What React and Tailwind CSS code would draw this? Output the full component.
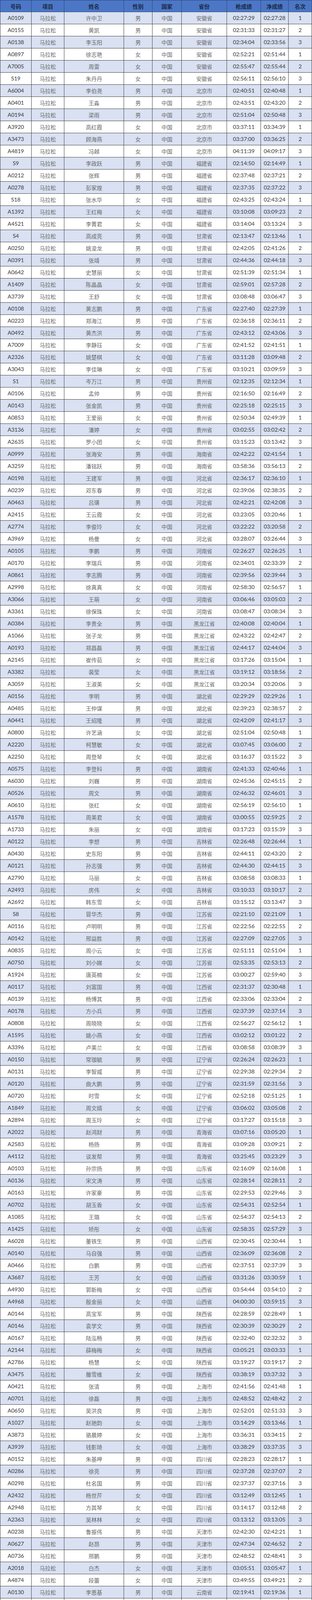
import React from 'react';

const raw = `A0109 许中卫 男 安徽省 02:27:29 02:27:28 1
A0155 黄凯 男 安徽省 02:31:33 02:31:27 2
A0138 李玉阳 男 安徽省 02:34:04 02:33:56 3
A0897 徐志艳 女 安徽省 02:52:21 02:51:44 1
A7005 周雷 女 安徽省 02:55:47 02:55:44 2
S19 朱丹丹 女 安徽省 02:56:11 02:56:10 3
A6004 李伯尧 男 北京市 02:40:51 02:40:48 1
A0401 王淼 男 北京市 02:43:51 02:43:20 2
A0194 梁雨 男 北京市 02:51:04 02:50:48 3
A3920 高红霞 女 北京市 03:37:11 03:34:39 1
A3473 顾海燕 女 北京市 03:37:00 03:36:25 2
A4819 冯越 女 北京市 04:11:39 04:09:17 3
S9 李政跃 男 福建省 02:14:50 02:14:49 1
A0212 张辉 男 福建省 02:37:48 02:37:21 2
A0278 彭家煌 男 福建省 02:37:35 02:37:22 3
S18 张水华 女 福建省 02:43:25 02:43:24 1
A1392 王红梅 女 福建省 03:10:08 03:09:23 2
A4521 李菁君 女 福建省 03:14:04 03:13:24 3
S4 高成亮 男 甘肃省 02:13:47 02:13:46 1
A0250 姚浚龙 男 甘肃省 02:42:05 02:41:26 2
A0391 张靖 男 甘肃省 02:44:36 02:44:18 3
A0642 史慧丽 女 甘肃省 02:51:39 02:51:34 1
A1409 陈晶晶 女 甘肃省 02:59:01 02:57:28 2
A3739 王舒 女 甘肃省 03:08:48 03:06:47 3
A0108 黄志鹏 男 广东省 02:27:40 02:27:39 1
A0223 郑海江 男 广东省 02:36:18 02:36:11 2
A0492 黄杰洪 男 广东省 02:43:12 02:43:06 3
A7009 李静珏 女 广东省 02:41:52 02:41:51 1
A2326 姚楚棋 女 广东省 03:11:28 03:09:48 2
A3043 李佳琳 女 广东省 03:10:21 03:09:59 3
S1 岑万江 男 贵州省 02:12:35 02:12:34 1
A0106 孟帅 男 贵州省 02:16:50 02:16:49 2
A0143 张金凯 男 贵州省 02:25:18 02:25:15 3
A0853 王爱丽 女 贵州省 02:50:34 02:49:39 1
A3136 潘婷 女 贵州省 03:02:55 03:02:42 2
A2635 罗小团 女 贵州省 03:15:23 03:13:42 3
A0999 张海安 男 海南省 02:42:22 02:41:54 1
A3259 潘铭跃 男 海南省 03:58:36 03:56:13 2
A0198 王建军 男 河北省 02:36:17 02:36:10 1
A0239 邓东春 男 河北省 02:39:06 02:38:35 2
A0463 吕璜 男 河北省 02:42:21 02:42:08 3
A2415 王云霞 女 河北省 03:23:05 03:20:46 1
A2774 李俊玲 女 河北省 03:22:22 03:20:58 2
A3969 杨曼 女 河北省 03:28:07 03:26:44 3
A0105 李鹏 男 河南省 02:26:27 02:26:25 1
A0170 李瑞兵 男 河南省 02:34:01 02:33:39 2
A0861 李志腾 男 河南省 02:39:56 02:39:44 3
A2998 徐真真 女 河南省 02:58:30 02:56:57 1
A3066 王萌 女 河南省 03:06:46 03:05:03 2
A3361 徐保珠 女 河南省 03:08:47 03:08:34 3
A0384 李贵全 男 黑龙江省 02:40:08 02:40:04 1
A1066 张子龙 男 黑龙江省 02:43:22 02:42:47 2
A0193 郑昌磊 男 黑龙江省 02:44:17 02:44:04 3
A2145 崔传茹 女 黑龙江省 03:17:26 03:15:04 1
A3382 裴莹 女 黑龙江省 03:19:12 03:18:56 2
A3059 王淑美 女 黑龙江省 03:20:34 03:20:06 3
A0156 李明 男 湖北省 02:29:29 02:29:26 1
A0485 王仲谋 男 湖北省 02:39:23 02:38:57 2
A0441 王绍隆 男 湖北省 02:42:09 02:41:17 3
A0800 许艺涵 女 湖北省 02:51:04 02:50:48 1
A2220 柯慧敏 女 湖北省 03:07:45 03:06:00 2
A2250 周登琴 女 湖北省 03:16:37 03:15:22 3
A0575 李登科 男 湖南省 02:41:33 02:40:46 1
A6030 刘巍 男 湖南省 02:45:36 02:45:15 2
A0526 周文 男 湖南省 02:46:32 02:46:01 3
A0610 张红 女 湖南省 02:56:19 02:56:10 1
A1578 周美君 女 湖南省 03:00:55 02:59:25 2
A1733 朱丽 女 湖南省 03:17:23 03:15:39 3
A0122 李想 男 吉林省 02:26:48 02:26:44 1
A0430 史东阳 男 吉林省 02:44:11 02:43:20 2
A0121 孙志强 男 吉林省 02:44:30 02:44:15 3
A2790 马丽 女 吉林省 03:08:58 03:08:33 1
A2493 房伟 女 吉林省 03:10:33 03:10:17 2
A2692 韩东雪 女 吉林省 03:15:12 03:13:47 3
S8 冒华杰 男 江苏省 02:21:10 02:21:09 1
A0116 卢明明 男 江苏省 02:22:56 02:22:55 2
A0142 邢益胜 男 江苏省 02:27:09 02:27:05 3
A0835 周小云 女 江苏省 02:51:11 02:51:04 1
A0750 刘小娣 女 江苏省 02:53:35 02:53:13 2
A1924 唐英楠 女 江苏省 03:00:27 02:59:40 3
A0117 刘富国 男 江西省 02:31:37 02:30:48 1
A0139 杨博其 男 江西省 02:33:06 02:33:04 2
A0178 方小兵 男 江西省 02:37:39 02:37:14 3
A0808 周晓晓 女 江西省 02:56:27 02:56:12 1
A1595 姚小燕 女 江西省 03:02:12 03:01:22 2
A3396 卢美兰 女 江西省 03:08:58 03:08:39 3
A0150 常珈毓 男 辽宁省 02:26:24 02:26:23 1
A0131 李智威 男 辽宁省 02:29:38 02:29:34 2
A0120 曲大鹏 男 辽宁省 02:31:59 02:31:56 3
A0720 时雪 女 辽宁省 02:52:18 02:51:25 1
A1849 周文婧 女 辽宁省 03:06:02 03:05:08 2
A2894 周玉玲 女 辽宁省 03:17:27 03:15:18 3
A2022 赵鸿财 男 青海省 03:07:16 03:05:20 1
A2583 杨扬 男 青海省 03:09:28 03:09:21 2
A4112 谈发帮 男 青海省 03:25:45 03:23:29 3
A0103 孙宗扬 男 山东省 02:16:09 02:16:08 1
A0136 宋文涛 男 山东省 02:28:14 02:28:11 2
A0163 许家豪 男 山东省 02:29:53 02:29:46 3
A0702 胡玉香 女 山东省 02:54:31 02:52:54 1
A1085 王璐 女 山东省 02:54:37 02:54:13 2
A1425 矫彤 女 山东省 02:58:35 02:57:29 3
A6028 董铁生 男 山西省 02:30:45 02:30:44 1
A0140 马自强 男 山西省 02:36:09 02:36:08 2
A0466 白鹏 男 山西省 02:37:51 02:37:39 3
A3687 王芳 女 山西省 03:31:26 03:30:59 1
A4930 郭新梅 女 山西省 03:54:44 03:54:10 2
A4968 殷金丽 女 山西省 04:00:30 03:59:15 3
A0144 高宝军 男 陕西省 02:28:59 02:28:49 1
A0146 袁学文 男 陕西省 02:30:39 02:30:29 2
A0167 陆泓畅 男 陕西省 02:32:40 02:32:32 3
A2144 薛梅梅 女 陕西省 03:05:21 03:03:33 1
A2786 杨慧 女 陕西省 03:19:27 03:19:17 2
A3475 雒雪维 女 陕西省 03:38:19 03:37:32 3
A0421 张清 男 上海市 02:41:56 02:41:48 1
A0701 徐磊 男 上海市 02:48:52 02:48:42 2
A0650 吴洪良 男 上海市 02:52:01 02:51:33 3
A1027 赵驰韵 女 上海市 03:14:29 03:13:46 1
A3873 骆晨婷 女 上海市 03:36:31 03:34:15 2
A3939 钱影琦 女 上海市 03:38:29 03:37:35 3
A0152 朱基呷 男 四川省 02:28:23 02:28:17 1
A0286 徐亮 男 四川省 02:37:28 02:37:07 2
A0298 杜名国 男 四川省 02:37:37 02:37:16 3
A2432 杨世芹 女 四川省 03:12:49 03:12:45 1
A2948 方其琴 女 四川省 03:14:17 03:12:48 2
A2363 吴林林 女 四川省 03:13:12 03:13:05 3
A0238 鲁振伟 男 天津市 02:42:30 02:42:21 1
A0627 赵昂 男 天津市 02:47:34 02:46:52 2
A0736 邢鹏 男 天津市 02:48:52 02:48:41 3
A2018 白杰 女 天津市 03:05:51 03:05:47 1
A4874 段蕾 女 天津市 03:49:55 03:49:21 2
A0130 李恩基 男 云南省 02:19:41 02:19:36 1
S6 冯铭缘 男 云南省 02:20:28 02:20:27 2
A0119 赵海杰 男 云南省 02:32:22 02:32:17 3
S16 窦发仙 女 云南省 02:40:43 02:40:42 1
A3548 董祯燕 女 云南省 03:23:48 03:23:23 2
A4590 何绕红 女 云南省 03:38:22 03:37:18 3
A0118 吴振涛 男 浙江省 02:23:45 02:23:44 1
A0127 余哲 男 浙江省 02:28:58 02:28:55 2
A0200 赵梓皓 男 浙江省 02:31:18 02:31:00 3
A0365 丁璐 女 浙江省 02:48:15 02:48:12 1
A1424 卢慧艳 女 浙江省 03:01:29 03:00:19 2
A1677 欧阳永芬 女 浙江省 03:07:21 03:07:05 3
A0104 周友发 男 重庆市 02:19:28 02:19:27 1
A0101 许汝安 男 重庆市 02:28:49 02:28:47 2
A4484 马军 男 重庆市 02:57:47 02:57:20 3
A1854 王银春 女 重庆市 03:01:33 03:01:03 1
S10 巴合塔尔·吾拉孜艾力 男 新疆维吾尔自治区 02:20:44 02:20:43 1
A1486 张珺坤 男 新疆维吾尔自治区 02:58:27 02:57:42 2
A1332 肖鹏飞 男 新疆维吾尔自治区 02:59:48 02:58:41 3
A0968 王婷婷 女 新疆维吾尔自治区 02:59:42 02:58:14 1
A1276 阚婷 女 新疆维吾尔自治区 02:59:16 02:58:31 2
A0164 孟克乌乐吉 男 内蒙古自治区 02:29:44 02:29:36 1
A0235 曹圣 男 内蒙古自治区 02:45:48 02:45:41 2
A0679 赵昀鹏 男 内蒙古自治区 02:50:27 02:49:04 3
A2622 康瑞峰 女 内蒙古自治区 03:03:35 03:03:12 1
A2325 安翠云 女 内蒙古自治区 03:09:43 03:09:21 2
A3216 乔飞雪 女 内蒙古自治区 03:27:55 03:27:16 3
A0260 江盛意 男 宁夏回族自治区 02:47:44 02:47:35 1
A0472 杨锐 男 宁夏回族自治区 02:49:28 02:48:31 2
A0599 叶韶宇 男 宁夏回族自治区 02:50:17 02:49:49 3
A4365 强月兰 女 宁夏回族自治区 03:36:19 03:36:15 1
A4258 魏彦秀 女 宁夏回族自治区 03:53:12 03:52:54 2
A0234 覃继辉 男 广西壮族自治区 02:35:30 02:35:11 1
A0349 庞俊富 男 广西壮族自治区 02:39:35 02:38:27 2
A0567 龚逸波 男 广西壮族自治区 02:47:26 02:47:23 3
A2103 黄梅 女 广西壮族自治区 03:10:05 03:08:25 1
A4075 石善楚 女 广西壮族自治区 03:31:53 03:30:21 2
A3633 黄娟秀 女 广西壮族自治区 03:44:25 03:42:56 3
A1746 洪长堤 男 澳门特别行政区 03:13:45 03:12:03 1
A0290 程中洲 男 台湾省 02:38:58 02:38:56 1`;

const rows = raw.split('\n').map((line) => {
  const [code, name, gender, province, gun, net, rank] = line.trim().split(' ');
  return { code, name, gender, province, gun, net, rank };
});

const headers = ['号码', '项目', '姓名', '性别', '国家', '省份', '枪成绩', '净成绩', '名次'];

// column widths taken from the sheet: 81 84 153 73 75 116 87 71 60 = 800
const grid = 'grid grid-cols-[81px_84px_153px_73px_75px_116px_87px_71px_60px]';
const num = "font-['Lato','Liberation_Sans',sans-serif] text-[#383838]";
const cjk = "font-['Noto_Sans_CJK_SC','Noto_Sans',sans-serif] text-[#6a6a6a]";
const cell = 'flex items-center justify-center overflow-hidden whitespace-nowrap border-r border-[#3f3f3f] text-[14px] leading-none';

function Row({ r, i }) {
  return (
    <div className={`${grid} h-[31px] border-b border-[#3f3f3f] ${i % 2 === 0 ? 'bg-[#d9e1f2]' : 'bg-white'}`}>
      <div className={`${cell} ${num} border-l`}>{r.code}</div>
      <div className={`${cell} ${cjk}`}>马拉松</div>
      <div className={`${cell} ${cjk}`}>{r.name}</div>
      <div className={`${cell} ${cjk}`}>{r.gender}</div>
      <div className={`${cell} ${cjk}`}>中国</div>
      <div className={`${cell} ${cjk} tracking-[-0.5px]`}>{r.province}</div>
      <div className={`${cell} ${num}`}>{r.gun}</div>
      <div className={`${cell} ${num}`}>{r.net}</div>
      <div className={`${cell} ${num}`}>{r.rank}</div>
    </div>
  );
}

export default function App() {
  return (
    <div className="w-[800px] bg-white">
      <div className={`${grid} h-[31px] border-t border-b border-[#2f4470] bg-[#4b77c6]`}>
        {headers.map((h, i) => (
          <div
            key={h}
            className={`flex items-center justify-center border-r border-[#2f4470] font-['Noto_Sans_CJK_SC',sans-serif] text-[14px] font-bold leading-none text-[#1b2948] ${i === 0 ? 'border-l' : ''}`}
          >
            {h}
          </div>
        ))}
      </div>
      {rows.map((r, i) => (
        <Row key={r.code + i} r={r} i={i} />
      ))}
    </div>
  );
}
